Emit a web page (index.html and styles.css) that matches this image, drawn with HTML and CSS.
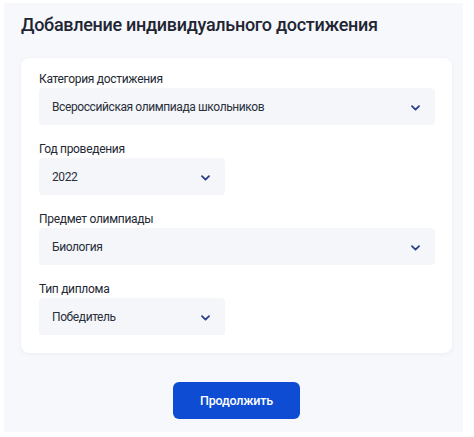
FILE: index.html
```html
<!DOCTYPE html>
<html lang="ru">
<head>
<meta charset="utf-8">
<link rel="stylesheet" href="styles.css">
</head>
<body>
<div class="page">
  <h1 class="title">Добавление индивидуального достижения</h1>
  <div class="card">
    <div class="field">
      <div class="label">Категория достижения</div>
      <div class="select wide"><span>Всероссийская олимпиада школьников</span>
        <svg class="chev" width="9" height="6" viewBox="0 0 9 6"><path d="M1 1.2 L4.5 4.6 L8 1.2" fill="none" stroke="#2b3f8c" stroke-width="1.8" stroke-linecap="round" stroke-linejoin="round"/></svg>
      </div>
    </div>
    <div class="field">
      <div class="label">Год проведения</div>
      <div class="select narrow"><span>2022</span>
        <svg class="chev" width="9" height="6" viewBox="0 0 9 6"><path d="M1 1.2 L4.5 4.6 L8 1.2" fill="none" stroke="#2b3f8c" stroke-width="1.8" stroke-linecap="round" stroke-linejoin="round"/></svg>
      </div>
    </div>
    <div class="field">
      <div class="label">Предмет олимпиады</div>
      <div class="select wide"><span>Биология</span>
        <svg class="chev" width="9" height="6" viewBox="0 0 9 6"><path d="M1 1.2 L4.5 4.6 L8 1.2" fill="none" stroke="#2b3f8c" stroke-width="1.8" stroke-linecap="round" stroke-linejoin="round"/></svg>
      </div>
    </div>
    <div class="field">
      <div class="label">Тип диплома</div>
      <div class="select narrow"><span>Победитель</span>
        <svg class="chev" width="9" height="6" viewBox="0 0 9 6"><path d="M1 1.2 L4.5 4.6 L8 1.2" fill="none" stroke="#2b3f8c" stroke-width="1.8" stroke-linecap="round" stroke-linejoin="round"/></svg>
      </div>
    </div>
  </div>
  <div class="actions">
    <button class="btn">Продолжить</button>
  </div>
</div>
</body>
</html>
```

FILE: styles.css
```css
html, body {
  margin: 0;
  padding: 0;
  background: #ffffff;
}
body {
  font-family: Roboto, "Liberation Sans", sans-serif;
  color: #1d2330;
}
.page {
  margin: 3px 11px 0 4px;
  height: 429px;
  box-sizing: border-box;
  background: #f6f8fb;
  padding: 10px 11px 0 17px;
}
.title {
  margin: 0;
  font-size: 18px;
  line-height: 24px;
  font-weight: 500;
  color: #1f2533;
  letter-spacing: -0.3px;
}
.card {
  margin-top: 21px;
  background: #ffffff;
  border-radius: 8px;
  box-shadow: 0 1px 4px rgba(40, 60, 100, 0.06);
  padding: 12px 17px 18px 18px;
  display: flex;
  flex-direction: column;
  gap: 15px;
}
.field {
  display: flex;
  flex-direction: column;
}
.label {
  font-size: 12px;
  line-height: 18px;
  color: #232832;
  letter-spacing: -0.3px;
}
.select {
  height: 37px;
  box-sizing: border-box;
  background: #f4f6f9;
  border-radius: 4px;
  display: flex;
  align-items: center;
  justify-content: space-between;
  padding: 0 15px 0 13px;
  font-size: 12px;
  letter-spacing: -0.4px;
  color: #2a2f3a;
}
.select.narrow {
  width: 186px;
}
.chev {
  display: block;
  margin-top: 2px;
}
.actions {
  display: flex;
  justify-content: center;
  margin-top: 29px;
}
.btn {
  width: 127px;
  height: 37px;
  border: none;
  border-radius: 6px;
  background: #0d4cd3;
  color: #ffffff;
  font-family: Roboto, "Liberation Sans", sans-serif;
  font-size: 12.5px;
  font-weight: 500;
  letter-spacing: -0.2px;
  cursor: pointer;
}
```
